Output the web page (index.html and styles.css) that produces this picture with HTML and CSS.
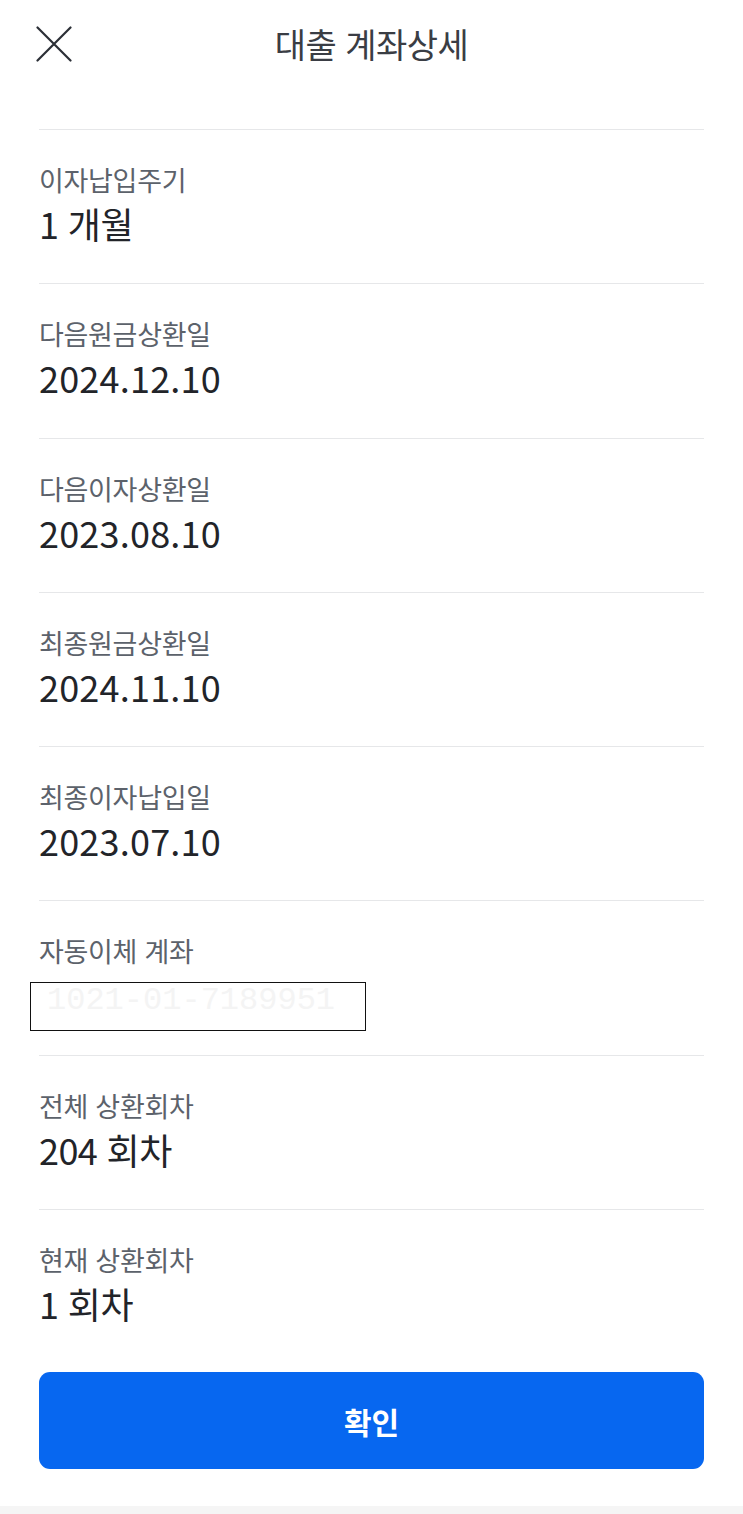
FILE: index.html
```html
<!DOCTYPE html>
<html lang="ko">
<head>
<meta charset="utf-8">
<title>대출 계좌상세</title>
<link rel="stylesheet" href="styles.css">
</head>
<body>
<div class="page">
  <header class="header">
    <button class="close" aria-label="닫기">
      <svg width="36" height="36" viewBox="0 0 36 36"><path d="M1.5 1.5 L34.5 34.5 M34.5 1.5 L1.5 34.5" stroke="#2b2f36" stroke-width="2.2" stroke-linecap="round" fill="none"/></svg>
    </button>
    <h1 class="title">대출 계좌상세</h1>
  </header>
  <main class="list">
    <div class="item"><div class="label">이자납입주기</div><div class="value">1 개월</div></div>
    <div class="item"><div class="label">다음원금상환일</div><div class="value num">2024.12.10</div></div>
    <div class="item"><div class="label">다음이자상환일</div><div class="value num">2023.08.10</div></div>
    <div class="item"><div class="label">최종원금상환일</div><div class="value num">2024.11.10</div></div>
    <div class="item"><div class="label">최종이자납입일</div><div class="value num">2023.07.10</div></div>
    <div class="item"><div class="label">자동이체 계좌</div><div class="value"><span class="redact">1021-01-7189951</span></div></div>
    <div class="item"><div class="label">전체 상환회차</div><div class="value">204 회차</div></div>
    <div class="item"><div class="label">현재 상환회차</div><div class="value">1 회차</div></div>
    <button class="confirm">확인</button>
  </main>
  <div class="bottom-bar"></div>
</div>
</body>
</html>
```
FILE: styles.css
```css
* { box-sizing: border-box; }
html, body { margin: 0; padding: 0; background: #fff; }
body { font-family: "Noto Sans CJK KR", "Noto Sans", sans-serif; color: #222429; }
.page { width: 743px; min-height: 1514px; display: flex; flex-direction: column; }
.header { height: 88px; display: flex; align-items: center; justify-content: center; position: relative; }
.close { position: absolute; left: 36px; top: 26px; width: 36px; height: 36px; padding: 0; border: 0; background: none; display: block; }
.close svg { display: block; }
.title { margin: 0; font-size: 34px; font-weight: 400; color: #3a3d44; letter-spacing: -0.5px; line-height: 1; }
.list { padding: 41px 39px 0 39px; display: flex; flex-direction: column; flex: 1; }
.item { border-top: 1px solid #e6e7e9; padding: 31px 0 36.3px 0; }
.label { font-size: 27px; line-height: 38px; color: #5c626b; letter-spacing: -0.3px; }
.value { font-size: 36px; line-height: 48px; color: #222429; height: 48px; letter-spacing: -0.6px; }
.value.num { letter-spacing: 0.2px; }
.redact { display: inline-block; position: relative; left: -9px; top: 12px; width: 336px; height: 49px; border: 1.5px solid #111; color: #f4f4f4; font-family: "Liberation Mono", monospace; font-size: 32px; line-height: 36px; padding-left: 16px; vertical-align: top; white-space: nowrap; overflow: hidden; letter-spacing: 0; }
.confirm { margin-top: 9px; height: 97px; border: 0; border-radius: 11px; background: #0767f0; color: #fff; font-family: inherit; font-size: 30px; font-weight: 700; }
.bottom-bar { height: 8px; background: #f5f5f5; margin-top: auto; }
```
